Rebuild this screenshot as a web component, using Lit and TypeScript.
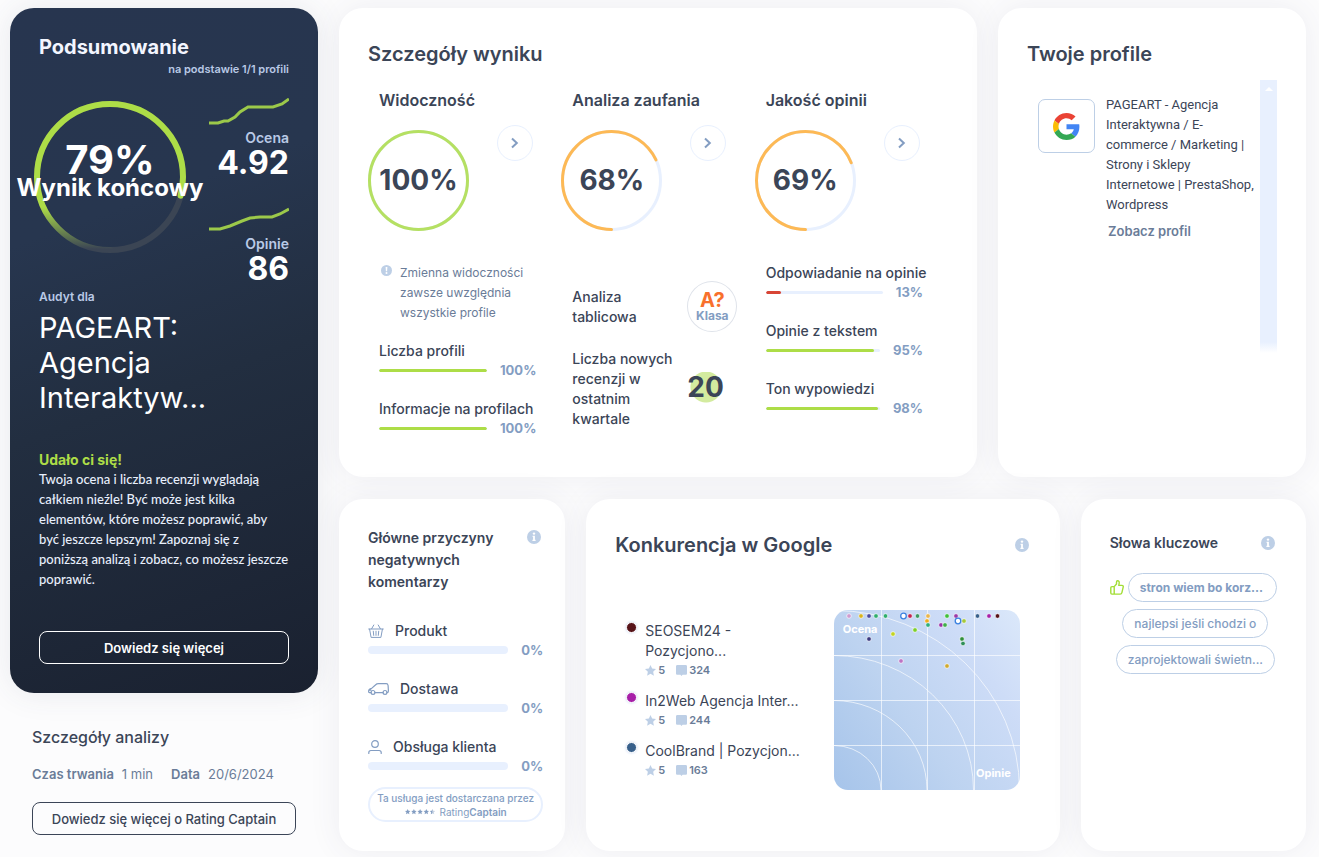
import { LitElement, html, svg, css, nothing } from "lit";
import { customElement, property } from "lit/decorators.js";
import { styleMap } from "lit/directives/style-map.js";

const base = css`
  :host {
    display: block;
    font-family: Inter, "Open Sans", sans-serif;
    color: #3b4557;
  }
  *,
  *::before {
    box-sizing: border-box;
  }
  h1, h2, h3, h4, p, ul, dl, dd, dt {
    margin: 0;
    padding: 0;
    font-size: inherit;
    font-weight: inherit;
  }
  ul {
    list-style: none;
  }
  button {
    font-family: inherit;
    cursor: pointer;
    background: none;
    margin: 0;
    padding: 0;
  }
  svg {
    display: block;
    flex: none;
  }
`;

/** Circular gauge that starts at six o'clock and runs clockwise. */
@customElement("score-ring")
export class ScoreRing extends LitElement {
  @property({ type: Number }) value = 0;
  @property() color = "#addd47";
  @property({ type: Boolean }) large = false;

  static styles = [
    base,
    css`
      .ring {
        position: relative;
        display: flex;
        align-items: center;
        justify-content: center;
        width: 101px;
        height: 101px;
      }
      .large {
        width: 152px;
        height: 152px;
      }
      svg {
        position: absolute;
        inset: 0;
      }
      .label {
        position: relative;
        font-size: 28px;
        font-weight: 700;
        line-height: 40px;
        white-space: nowrap;
        padding-bottom: 2px;
      }
      .total {
        position: relative;
        display: flex;
        flex: none;
        flex-direction: column;
        align-items: center;
        color: #fff;
        font-weight: 700;
        white-space: nowrap;
        padding-bottom: 8px;
      }
      .total strong {
        font-size: 40px;
        font-weight: 700;
        line-height: 30px;
      }
      .total span {
        font-size: 24px;
        line-height: 26px;
      }
    `,
  ];

  render() {
    const size = this.large ? 152 : 101;
    const stroke = this.large ? 6 : 3;
    const r = (size - stroke) / 2;
    const c = size / 2;
    const len = 2 * Math.PI * r;
    return html`
      <div class="ring ${this.large ? "large" : ""}">
        <svg width=${size} height=${size} fill="none" stroke-width=${stroke} aria-hidden="true">
          ${this.large
            ? svg`<defs><linearGradient id="arc" gradientUnits="userSpaceOnUse" x1=${size - 4} y1="0" x2="106" y2="0">
                <stop offset="0" stop-color="#addd47" stop-opacity="0"></stop>
                <stop offset="1" stop-color="#addd47"></stop></linearGradient></defs>`
            : nothing}
          <circle cx=${c} cy=${c} r=${r} stroke=${this.large ? "#3b4554" : "#e8f0fe"}></circle>
          <circle
            cx=${c}
            cy=${c}
            r=${r}
            stroke=${this.large ? "url(#arc)" : this.color}
            stroke-linecap="round"
            stroke-dasharray="${(len * this.value) / 100} ${len}"
            transform="rotate(90 ${c} ${c})"
          ></circle>
        </svg>
        ${this.large
          ? html`<div class="total"><strong>${this.value}%</strong><span>Wynik końcowy</span></div>`
          : html`<div class="label">${this.value}%</div>`}
      </div>
    `;
  }
}

/** Horizontal bar with its percentage on the right. */
@customElement("meter-bar")
export class MeterBar extends LitElement {
  @property({ type: Number }) value = 0;
  @property({ type: Boolean }) thick = false;
  @property() color = "#addd47";

  static styles = [
    base,
    css`
      .row {
        display: flex;
        align-items: center;
        gap: 13px;
        height: 18px;
      }
      .track {
        flex: 1;
        height: 3px;
        border-radius: 4px;
        background: #e8f0fe;
        overflow: hidden;
      }
      .thick .track {
        height: 8px;
      }
      .fill {
        height: 100%;
        border-radius: 4px;
      }
      .num {
        font-size: 13px;
        font-weight: 700;
        color: #839dc2;
      }
    `,
  ];

  render() {
    return html`
      <div class="row ${this.thick ? "thick" : ""}">
        <div class="track">
          <div class="fill" style=${styleMap({ width: `${this.value}%`, background: this.color })}></div>
        </div>
        <span class="num">${this.value}%</span>
      </div>
    `;
  }
}

const infoIcon = html`<svg width="14" height="14" viewBox="0 0 14 14" role="img" aria-label="Informacja">
  <circle cx="7" cy="7" r="7" fill="#bdcfe6"></circle>
  <circle cx="7" cy="3.6" r="1.2" fill="#fff"></circle>
  <path d="M5.6 5.8h2.3v4h.7v1.1H5.4V9.8h.7V6.9h-.5z" fill="#fff"></path>
</svg>`;

const googleLogo = html`<svg width="27" height="27" viewBox="0 0 48 48" role="img" aria-label="Google">
  <path fill="#EA4335" d="M24 9.5c3.54 0 6.71 1.22 9.21 3.6l6.85-6.85C35.9 2.38 30.47 0 24 0 14.62 0 6.51 5.38 2.56 13.22l7.98 6.19C12.43 13.72 17.74 9.5 24 9.5z"></path>
  <path fill="#4285F4" d="M46.98 24.55c0-1.57-.15-3.09-.38-4.55H24v9.02h12.94c-.58 2.96-2.26 5.48-4.78 7.18l7.73 6c4.51-4.18 7.09-10.36 7.09-17.65z"></path>
  <path fill="#FBBC05" d="M10.53 28.59c-.48-1.45-.76-2.99-.76-4.59s.27-3.14.76-4.59l-7.98-6.19C.92 16.46 0 20.12 0 24c0 3.88.92 7.54 2.56 10.78l7.97-6.19z"></path>
  <path fill="#34A853" d="M24 48c6.48 0 11.93-2.13 15.89-5.81l-7.73-6c-2.15 1.45-4.92 2.3-8.16 2.3-6.26 0-11.57-4.22-13.47-9.91l-7.98 6.19C6.51 42.62 14.62 48 24 48z"></path>
</svg>`;

const basketIcon = html`<svg width="16" height="14" viewBox="0 0 16 14" fill="none" stroke="#839dc2" stroke-linecap="round" stroke-linejoin="round">
  <path d="M.7 5h14.6M1.6 5.2l1.5 8.2h9.8l1.5-8.2M5.8 1 3.6 4.8M10.2 1l2.2 3.8M5.3 7.2l.4 4.2M8 7.2v4.2M10.7 7.2l-.4 4.2"></path>
</svg>`;
const carIcon = html`<svg width="21" height="12" viewBox="0 0 21 12" fill="none" stroke="#839dc2" stroke-width="1.2" stroke-linecap="round" stroke-linejoin="round">
  <path d="M3.1 9.6H1.4C.7 9.6.6 9 .6 8.4c0-2 1-2.7 3-3L7.4 2C8.4 1 9.200.7 10.6.7h7.6c1.200 0 1.7.6 1.9 1.8l.3 5.4c0 1.1-.4 1.7-1.4 1.7M7 9.6h8M1 7.2h2"></path>
  <circle cx="5" cy="9.4" r="1.9"></circle><circle cx="17" cy="9.4" r="1.9"></circle>
</svg>`;
const personIcon = html`<svg width="14" height="14" viewBox="0 0 14 14" fill="none" stroke="#839dc2" stroke-width="1.2" stroke-linecap="round">
  <circle cx="7" cy="4" r="3.3"></circle><path d="M.8 13.4v-.8c0-1.2.9-2.1 2.1-2.1h8.2c1.2 0 2.1.9 2.1 2.1v.8"></path>
</svg>`;
const thumbIcon = html`<svg width="14" height="15" viewBox="0 0 14 15" fill="none" stroke="#a2de35" stroke-width="1.4" stroke-linejoin="round">
  <path d="M4.2 6.6 6.5 4V2.2C6.5 1.2 7 .8 7.6.8c1.2 0 1.7 1 1.6 2.2L8.8 5.4h3.1c1.2 0 1.5.8 1.3 1.7l-1.3 5.5c-.2.9-.7 1.5-1.7 1.5H4.2M4.2 6.6H1.9C1.1 6.6.8 7 .8 7.7V13c0 .8.4 1.1 1.1 1.1h2.3z"></path>
</svg>`;
const starIcon = html`<svg width="11" height="11" viewBox="0 0 12 12" fill="#bdcfe6"><path d="m6 0 1.8 3.9 4.2.5-3.1 2.9.8 4.3L6 9.5l-3.7 2.1.8-4.3L0 4.4l4.2-.5z"></path></svg>`;
const chatIcon = html`<svg width="11" height="11" viewBox="0 0 11 11" fill="#bdcfe6"><path d="M1.5 0h8C10.5 0 11 .5 11 1.5v7c0 1-.5 1.2-1.5 1.2H6.6L5.5 11 4.400 9.700H1.5C.5 9.700 0 9.500 0 8.500v-7C0 .5.5 0 1.5 0z"></path></svg>`;
const ratingStars = html`<svg width="31" height="6" viewBox="0 0 31 6" fill="#839dc2">
  ${[0, 6.2, 12.4, 18.6].map(
    (x) => svg`<path transform="translate(${x} 0)" d="m2.7 0 .8 1.8 1.9.2-1.4 1.3.4 1.9-1.7-1-1.7 1 .4-1.9L0 2l1.9-.2z"></path>`,
  )}
  <path transform="translate(24.8 0)" d="m2.7 0 v4.2l-1.7 1 .4-1.9L0 2l1.9-.2z"></path>
  <path transform="translate(24.8 0)" opacity=".45" d="m2.7 0 .8 1.8 1.9.2-1.4 1.3.4 1.9-1.7-1z"></path>
</svg>`;

const spark = (d: string) => html`<svg width="80" height="28" viewBox="0 0 80 28" fill="none" stroke="#9cc94a" stroke-width="3" aria-hidden="true">
  <path d=${d}></path>
</svg>`;

@customElement("summary-card")
export class SummaryCard extends LitElement {
  static styles = [
    base,
    css`
      .card {
        padding: 27px 29px 29px;
        border-radius: 24px;
        color: #fff;
        background: linear-gradient(160deg, #27354f 0%, #27364f 30%, #222e40 55%, #1a2130 100%);
        box-shadow: 0 0 32px rgba(60, 70, 100, 0.1);
      }
      h1 {
        font-size: 20px;
        font-weight: 700;
        line-height: 24px;
        color: #f3f6ff;
      }
      .basis {
        text-align: right;
        font-size: 11px;
        font-weight: 600;
        line-height: 14px;
        color: #b9c9e6;
        margin-top: 3px;
      }
      .scores {
        display: flex;
        justify-content: space-between;
        margin-top: 22px;
        margin-left: -5px;
      }
      score-ring {
        margin-top: 3px;
      }
      .stats {
        display: flex;
        flex-direction: column;
        gap: 25px;
      }
      .stat {
        display: flex;
        flex-direction: column;
        align-items: flex-end;
      }
      .stat dt {
        font-size: 14px;
        font-weight: 600;
        line-height: 18px;
        color: #b9c9e6;
        margin-top: 3px;
      }
      .stat dd {
        font-size: 32px;
        font-weight: 700;
        line-height: 32px;
      }
      .for {
        font-size: 12px;
        font-weight: 600;
        line-height: 16px;
        color: #b9c9e6;
        margin-top: 4px;
      }
      .company {
        font-size: 29px;
        font-weight: 400;
        line-height: 35px;
        margin-top: 5px;
      }
      .praise {
        margin-top: 36px;
        font-size: 14px;
        font-weight: 700;
        line-height: 18px;
        color: #addd47;
      }
      .text {
        font-family: Lato, Inter, sans-serif;
        font-size: 13px;
        font-weight: 500;
        line-height: 20px;
        color: #e8effc;
        white-space: nowrap;
      }
      .more {
        display: block;
        width: 100%;
        height: 33px;
        margin-top: 42px;
        border: 1px solid #fff;
        border-radius: 8px;
        color: #fff;
        font-size: 13px;
        font-weight: 600;
      }
    `,
  ];

  render() {
    return html`
      <section class="card">
        <h1>Podsumowanie</h1>
        <p class="basis">na podstawie 1/1 profili</p>
        <div class="scores">
          <score-ring large value="79"></score-ring>
          <dl class="stats">
            <div class="stat">
              ${spark("M0 25h9l6-2h4l7-4 5-5 8-5h25l9-3 7-5")}
              <dt>Ocena</dt>
              <dd>4.92</dd>
            </div>
            <div class="stat">
              ${spark("M0 25h11l10-3 12-5 8-3 10-1h12l8-3 9-5")}
              <dt>Opinie</dt>
              <dd>86</dd>
            </div>
          </dl>
        </div>
        <p class="for">Audyt dla</p>
        <h2 class="company">PAGEART:<br />Agencja<br />Interaktyw...</h2>
        <p class="praise">Udało ci się!</p>
        <p class="text">
          Twoja ocena i liczba recenzji wyglądają<br />całkiem nieźle! Być może jest kilka<br />elementów, które możesz
          poprawić, aby<br />być jeszcze lepszym! Zapoznaj się z<br />poniższą analizą i zobacz, co możesz jeszcze<br />poprawić.
        </p>
        <button class="more" type="button">Dowiedz się więcej</button>
      </section>
    `;
  }
}

@customElement("analysis-details")
export class AnalysisDetails extends LitElement {
  static styles = [
    base,
    css`
      .box {
        padding: 0 22px;
      }
      h2 {
        font-size: 16px;
        font-weight: 500;
        line-height: 20px;
      }
      dl {
        display: flex;
        gap: 18px;
        margin-top: 18px;
        font-size: 13px;
        line-height: 18px;
        color: #6a7c98;
      }
      dl div {
        display: flex;
        gap: 8px;
        white-space: nowrap;
      }
      dt {
        font-weight: 600;
      }
      button {
        width: 100%;
        height: 33px;
        margin-top: 19px;
        border: 1px solid #3b4557;
        border-radius: 8px;
        color: #3b4557;
        font-size: 13px;
        font-weight: 500;
        white-space: nowrap;
      }
    `,
  ];

  render() {
    return html`
      <section class="box">
        <h2>Szczegóły analizy</h2>
        <dl>
          <div><dt>Czas trwania</dt><dd>1 min</dd></div>
          <div><dt>Data</dt><dd>20/6/2024</dd></div>
        </dl>
        <button type="button">Dowiedz się więcej o Rating Captain</button>
      </section>
    `;
  }
}

interface Metric {
  label: string;
  value: number;
  color?: string;
}

@customElement("score-details")
export class ScoreDetails extends LitElement {
  static styles = [
    base,
    css`
      h2 {
        font-size: 20px;
        font-weight: 600;
        line-height: 24px;
      }
      .columns {
        display: grid;
        grid-template-columns: repeat(3, 1fr);
        margin-top: 24px;
      }
      h3 {
        padding-left: 11px;
        font-size: 16px;
        font-weight: 600;
        line-height: 20px;
        white-space: nowrap;
      }
      .gauge {
        display: flex;
        align-items: flex-start;
        gap: 28px;
        margin-top: 15px;
      }
      .go {
        display: grid;
        place-items: center;
        width: 36px;
        height: 36px;
        border: 1px solid #e8f0fe;
        border-radius: 50%;
      }
      score-ring {
        margin-top: 5px;
      }
      .body {
        padding: 32px 0 0 11px;
      }
      .note {
        display: flex;
        gap: 8px;
        font-size: 12px;
        line-height: 20px;
        color: #6a7c98;
        white-space: nowrap;
      }
      .note svg {
        margin: 2px 0 0 2px;
      }
      .metrics {
        display: flex;
        flex-direction: column;
        gap: 20px;
        font-size: 14px;
        font-weight: 500;
        line-height: 20px;
        white-space: nowrap;
      }
      .note + .metrics {
        margin-top: 18px;
      }
      .metrics meter-bar {
        margin-right: 25px;
      }
      .facts {
        display: flex;
        flex-direction: column;
        gap: 17px;
        padding-top: 18px;
        font-size: 14px;
        font-weight: 500;
        line-height: 20px;
      }
      .fact {
        display: grid;
        grid-template-columns: 101px 1fr;
        align-items: center;
        column-gap: 14px;
        white-space: nowrap;
      }
      .grade {
        display: flex;
        flex-direction: column;
        align-items: center;
        justify-content: center;
        width: 50px;
        height: 51px;
        border: 1px solid #dfe3ea;
        border-radius: 50%;
        font-size: 12px;
        font-weight: 700;
        line-height: 14px;
        color: #839dc2;
      }
      .grade strong {
        font-size: 20px;
        font-weight: 700;
        line-height: 18px;
        color: #f8702c;
      }
      .count {
        display: grid;
        place-items: center;
        width: 34px;
        height: 31px;
        margin-bottom: 4px;
        background: radial-gradient(circle at 19px 15px, #d3eb9f 15px, transparent 16px);
        font-size: 28px;
        font-weight: 700;
        line-height: 31px;
      }
    `,
  ];

  private column(title: string, value: number, color: string, body: unknown) {
    return html`
      <section>
        <h3>${title}</h3>
        <div class="gauge">
          <score-ring value=${value} color=${color}></score-ring>
          <button class="go" type="button" aria-label="Pokaż: ${title}">
            <svg width="8" height="12" viewBox="0 0 8 12" fill="none" stroke="#839dc2" stroke-width="2">
              <path d="m1 1.5 4.800 4.500L1 10.500"></path>
            </svg>
          </button>
        </div>
        <div class="body">${body}</div>
      </section>
    `;
  }

  private metrics(items: Metric[]) {
    return html`<ul class="metrics">
      ${items.map(
        (m) => html`<li>${m.label}<meter-bar value=${m.value} color=${m.color ?? "#addd47"}></meter-bar></li>`,
      )}
    </ul>`;
  }

  render() {
    return html`
      <h2>Szczegóły wyniku</h2>
      <div class="columns">
        ${this.column(
          "Widoczność",
          100,
          "#b5e062",
          html`
            <p class="note">
              <svg width="11" height="11" viewBox="0 0 11 11" aria-hidden="true">
                <circle cx="5.5" cy="5.5" r="5.5" fill="#bdcfe6"></circle>
                <path d="M4.600 2h1.800l-.3 4.200H4.900z" fill="#fff"></path>
                <circle cx="5.5" cy="8.1" r="1" fill="#fff"></circle>
              </svg>
              <span>Zmienna widoczności<br />zawsze uwzględnia<br />wszystkie profile</span>
            </p>
            ${this.metrics([
              { label: "Liczba profili", value: 100 },
              { label: "Informacje na profilach", value: 100 },
            ])}
          `,
        )}
        ${this.column(
          "Analiza zaufania",
          68,
          "#fdb955",
          html`
            <div class="facts">
              <div class="fact">
                <span>Analiza<br />tablicowa</span>
                <div class="grade"><strong>A?</strong>Klasa</div>
              </div>
              <div class="fact">
                <span>Liczba nowych<br />recenzji w<br />ostatnim<br />kwartale</span>
                <div class="count">20</div>
              </div>
            </div>
          `,
        )}
        ${this.column(
          "Jakość opinii",
          69,
          "#fdb955",
          this.metrics([
            { label: "Odpowiadanie na opinie", value: 13, color: "#d84535" },
            { label: "Opinie z tekstem", value: 95 },
            { label: "Ton wypowiedzi", value: 98 },
          ]),
        )}
      </div>
    `;
  }
}

@customElement("profile-list")
export class ProfileList extends LitElement {
  static styles = [
    base,
    css`
      h2 {
        font-size: 20px;
        font-weight: 600;
        line-height: 24px;
      }
      .list {
        display: flex;
        margin-top: 14px;
      }
      .profile {
        flex: 1;
        min-width: 0;
        display: flex;
        align-items: flex-start;
        gap: 11px;
        padding: 15px 0 0 11px;
      }
      .logo {
        flex: none;
        display: grid;
        place-items: center;
        width: 57px;
        height: 54px;
        margin-top: 4px;
        border: 1px solid #bdcfe6;
        border-radius: 7px;
      }
      .name {
        font-family: Roboto, Inter, sans-serif;
        font-size: 13px;
        line-height: 20px;
        white-space: nowrap;
      }
      a {
        display: inline-block;
        margin: 6px 0 0 2px;
        font-size: 13px;
        font-weight: 600;
        line-height: 20px;
        color: #6a7c98;
        text-decoration: none;
      }
      .scroll {
        flex: none;
        width: 17px;
        height: 273px;
        padding-top: 7px;
        background: linear-gradient(#e8f0fe 262px, #fff);
      }
      .scroll svg {
        margin: 0 auto;
      }
    `,
  ];

  render() {
    return html`
      <h2>Twoje profile</h2>
      <div class="list">
        <article class="profile">
          <div class="logo">${googleLogo}</div>
          <div>
            <h3 class="name">
              PAGEART - Agencja<br />Interaktywna / E-<br />commerce / Marketing |<br />Strony i Sklepy<br />Internetowe |
              PrestaShop,<br />Wordpress
            </h3>
            <a href="#profil">Zobacz profil</a>
          </div>
        </article>
        <div class="scroll" aria-hidden="true">
          <svg width="8" height="4" viewBox="0 0 8 4"><path d="M0 4 4 0l4 4z" fill="#fff"></path></svg>
        </div>
      </div>
    `;
  }
}

@customElement("negative-reasons")
export class NegativeReasons extends LitElement {
  static styles = [
    base,
    css`
      .head {
        display: flex;
        justify-content: space-between;
        margin-right: -5px;
      }
      .head svg {
        margin-top: 3px;
      }
      h2 {
        font-size: 14px;
        font-weight: 600;
        line-height: 22px;
      }
      .items {
        display: flex;
        flex-direction: column;
        gap: 20px;
        margin-top: 28px;
        margin-right: -7px;
      }
      .name {
        display: flex;
        align-items: center;
        gap: 11px;
        font-size: 14px;
        font-weight: 500;
        line-height: 20px;
        white-space: nowrap;
      }
      .by {
        display: flex;
        flex-direction: column;
        align-items: center;
        justify-content: center;
        height: 35px;
        margin: 12px -7px 0 0;
        border: 2px solid #e8f0fe;
        border-radius: 18px;
        color: #839dc2;
        font-size: 10px;
        font-weight: 500;
        line-height: 14px;
        white-space: nowrap;
      }
      .brand {
        display: flex;
        align-items: center;
        gap: 4px;
        font-weight: 400;
      }
      .brand b {
        font-weight: 600;
      }
    `,
  ];

  render() {
    const items = [
      { icon: basketIcon, name: "Produkt" },
      { icon: carIcon, name: "Dostawa" },
      { icon: personIcon, name: "Obsługa klienta" },
    ];
    return html`
      <div class="head">
        <h2>Główne przyczyny<br />negatywnych<br />komentarzy</h2>
        ${infoIcon}
      </div>
      <ul class="items">
        ${items.map(
          (i) => html`<li>
            <div class="name">${i.icon}${i.name}</div>
            <meter-bar thick value="0"></meter-bar>
          </li>`,
        )}
      </ul>
      <div class="by">
        <span>Ta usługa jest dostarczana przez</span>
        <span class="brand">${ratingStars}<span>Rating<b>Captain</b></span></span>
      </div>
    `;
  }
}

type Point = [x: number, y: number, color: string, kind?: "own"];

@customElement("google-competition")
export class GoogleCompetition extends LitElement {
  static styles = [
    base,
    css`
      .head {
        display: flex;
        justify-content: space-between;
        align-items: center;
        margin-right: 2px;
      }
      h2 {
        font-size: 20px;
        font-weight: 600;
        line-height: 24px;
      }
      .content {
        display: flex;
        justify-content: space-between;
        gap: 16px;
        margin: 53px 11px 0 11px;
      }
      .list {
        display: flex;
        flex-direction: column;
        gap: 12px;
        padding-top: 11px;
      }
      .rival {
        display: flex;
        gap: 8px;
      }
      .dot {
        flex: none;
        width: 11px;
        height: 11px;
        margin-top: 1px;
        border-radius: 50%;
        border: 1px solid #fff;
        box-shadow: 0 0 2px 1px #e8eefa;
      }
      .name {
        font-size: 14px;
        font-weight: 400;
        line-height: 20px;
        white-space: nowrap;
      }
      .meta {
        display: flex;
        gap: 11px;
        font-size: 11px;
        font-weight: 600;
        line-height: 18px;
        color: #6a7c98;
      }
      .meta span {
        display: flex;
        align-items: center;
        gap: 2px;
      }
      .map {
        position: relative;
        flex: none;
        width: 186px;
        height: 180px;
        border-radius: 14px;
        overflow: hidden;
        background: linear-gradient(55deg, #a6c4ea 0%, #bdd3f0 40%, #cddcf7 75%, #dbe8fa 100%);
      }
      .axis {
        position: absolute;
        font-size: 11px;
        font-weight: 700;
        line-height: 14px;
        color: #fff;
      }
      .y {
        left: 9px;
        top: 12px;
      }
      .x {
        right: 9px;
        bottom: 10px;
      }
    `,
  ];

  private rivals = [
    { color: "#571419", name: html`SEOSEM24 -<br />Pozycjono...`, reviews: 324 },
    { color: "#a71fa8", name: "In2Web Agencja Inter...", reviews: 244 },
    { color: "#38608b", name: "CoolBrand | Pozycjon...", reviews: 163 },
  ];

  private points: Point[] = [
    [15, 6, "#cf9bcf"], [27, 6, "#d9b31c"], [35, 6, "#4a4aa0"], [42, 6, "#2fae6d"], [51.5, 6, "#2fae6d"],
    [76, 6, "#c2224f"], [83.5, 6, "#3c9a63"], [94, 6, "#eab54c"], [93, 11, "#f0ac1c"], [94, 15, "#2fae7d"],
    [113, 6, "#3fbf3a"], [122, 6, "#9a3aa8"], [130, 11, "#a5c83a"], [107, 15, "#9a2fa8"], [111, 15, "#3fae4a"],
    [143.5, 6, "#38608b"], [155, 6, "#a71fa8"], [163.5, 6, "#571419"], [81, 20, "#7dcf2a"], [59, 24, "#c3d422"],
    [35, 29, "#3b3a80"], [128, 29, "#2f8f3a"], [129, 33.5, "#2f8f5a"], [67, 51, "#bd74c4"], [113, 56, "#cfa92f"],
    [69.5, 6, "#3c82e0", "own"], [124, 11, "#3c82e0", "own"],
  ];

  render() {
    return html`
      <div class="head">
        <h2>Konkurencja w Google</h2>
        ${infoIcon}
      </div>
      <div class="content">
        <ul class="list">
          ${this.rivals.map(
            (r) => html`<li class="rival">
              <span class="dot" style=${styleMap({ background: r.color })}></span>
              <div>
                <h3 class="name">${r.name}</h3>
                <div class="meta">
                  <span>${starIcon}5</span>
                  <span>${chatIcon}${r.reviews}</span>
                </div>
              </div>
            </li>`,
          )}
        </ul>
        <div class="map">
          <svg width="186" height="180" viewBox="0 0 186 180" fill="none" aria-hidden="true">
            <g stroke="#fff" stroke-opacity=".65">
              <path d="M47.5 0v180M93.5 0v180M140.5 0v180M0 45.5h186M0 90.5h186M0 135.5h186"></path>
              <ellipse cx="0" cy="180" rx="47" ry="44.5"></ellipse>
              <ellipse cx="0" cy="180" rx="93" ry="89.5"></ellipse>
              <ellipse cx="0" cy="180" rx="139.5" ry="134.5"></ellipse>
              <ellipse cx="0" cy="180" rx="185.5" ry="179.5"></ellipse>
            </g>
            ${this.points.map(([x, y, color, kind]) =>
              kind
                ? svg`<circle cx=${x} cy=${y} r="2.8" fill="#fff" stroke=${color} stroke-width="1.3"></circle>`
                : svg`<circle cx=${x} cy=${y} r="2.3" fill=${color} stroke="#fff" stroke-width=".8" stroke-opacity=".8"></circle>`,
            )}
          </svg>
          <span class="axis y">Ocena</span>
          <span class="axis x">Opinie</span>
        </div>
      </div>
    `;
  }
}

@customElement("keyword-list")
export class KeywordList extends LitElement {
  static styles = [
    base,
    css`
      .head {
        display: flex;
        justify-content: space-between;
        align-items: center;
        margin-right: 2px;
      }
      h2 {
        font-size: 14px;
        font-weight: 600;
        line-height: 20px;
      }
      .words {
        display: flex;
        flex-direction: column;
        gap: 7px;
        margin-top: 20px;
      }
      .words li {
        display: flex;
        align-items: center;
        justify-content: center;
        gap: 4px;
      }
      .words li + li {
        padding-left: 4px;
      }
      .word {
        padding: 0 11px;
        border: 1px solid #bdcfe6;
        border-radius: 15px;
        font-size: 12px;
        font-weight: 500;
        line-height: 27px;
        color: #839dc2;
        white-space: nowrap;
      }
      .top {
        flex: 1;
        font-weight: 700;
      }
    `,
  ];

  render() {
    return html`
      <div class="head">
        <h2>Słowa kluczowe</h2>
        ${infoIcon}
      </div>
      <ul class="words">
        <li>${thumbIcon}<span class="word top">stron wiem bo korz...</span></li>
        <li><span class="word">najlepsi jeśli chodzi o</span></li>
        <li><span class="word">zaprojektowali świetn...</span></li>
      </ul>
    `;
  }
}

@customElement("app-root")
export class AppRoot extends LitElement {
  static styles = [
    base,
    css`
      :host {
        min-height: 100vh;
        background: #fcfcfd;
      }
      .page {
        display: grid;
        grid-template-columns: 308px 1fr;
        gap: 21px;
        padding: 8px 13px 6px 10px;
      }
      .side {
        display: flex;
        flex-direction: column;
        gap: 34px;
      }
      .main {
        display: flex;
        flex-direction: column;
        gap: 22px;
      }
      .row {
        display: grid;
        gap: 21px;
      }
      .upper {
        grid-template-columns: minmax(0, 638fr) minmax(0, 308fr);
      }
      .lower {
        grid-template-columns: minmax(0, 226fr) minmax(0, 473fr) minmax(0, 225fr);
      }
      .card {
        border-radius: 24px;
        background: #fff;
        box-shadow: 0 0 32px rgba(60, 70, 100, 0.08);
        padding: 34px 29px 40px;
      }
      .card.reasons {
        padding: 28px 29px 29px;
      }
    `,
  ];

  render() {
    return html`
      <main class="page">
        <div class="side">
          <summary-card></summary-card>
          <analysis-details></analysis-details>
        </div>
        <div class="main">
          <div class="row upper">
            <score-details class="card"></score-details>
            <profile-list class="card"></profile-list>
          </div>
          <div class="row lower">
            <negative-reasons class="card reasons"></negative-reasons>
            <google-competition class="card"></google-competition>
            <keyword-list class="card"></keyword-list>
          </div>
        </div>
      </main>
    `;
  }
}
